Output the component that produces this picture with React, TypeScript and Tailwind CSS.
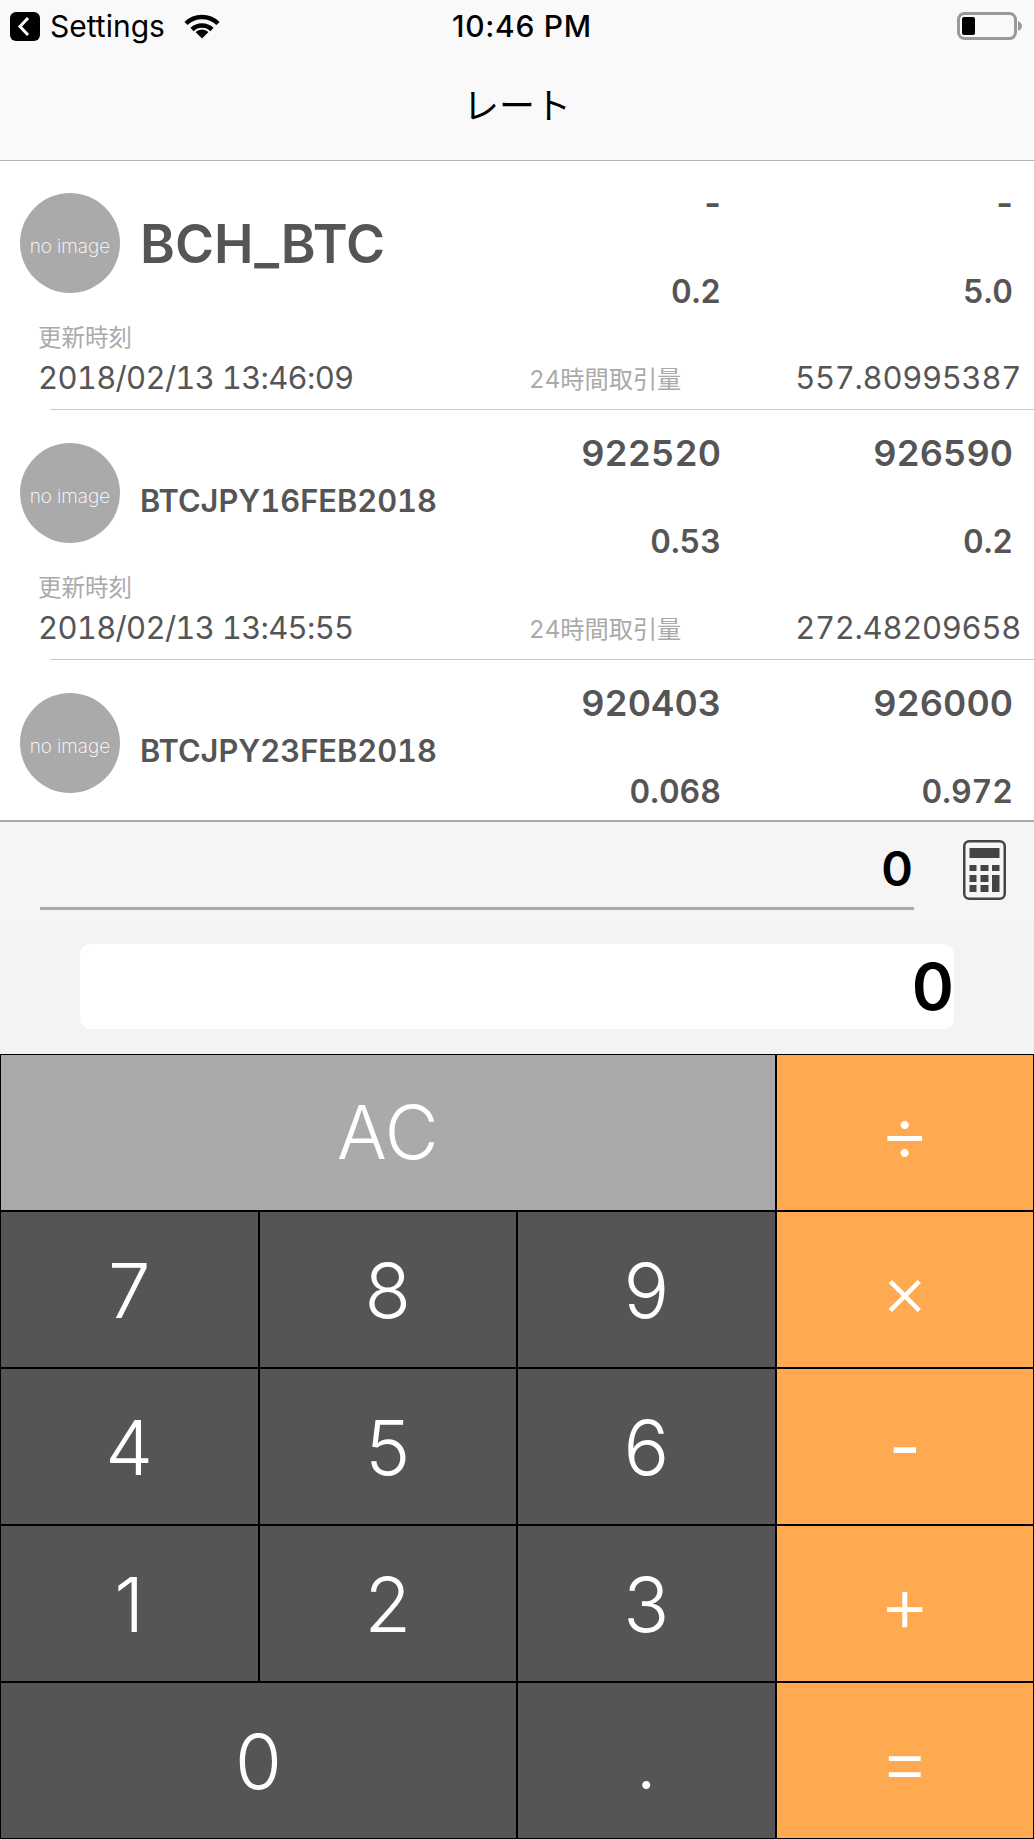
import React from 'react';

interface Rate {
  pair: string;
  big?: boolean;
  bid: string;
  ask: string;
  bidSize: string;
  askSize: string;
  time?: string;
  volume?: string;
}

const rates: Rate[] = [
  { pair: 'BCH_BTC', big: true, bid: '-', ask: '-', bidSize: '0.2', askSize: '5.0', time: '2018/02/13 13:46:09', volume: '557.80995387' },
  { pair: 'BTCJPY16FEB2018', bid: '922520', ask: '926590', bidSize: '0.53', askSize: '0.2', time: '2018/02/13 13:45:55', volume: '272.48209658' },
  { pair: 'BTCJPY23FEB2018', bid: '920403', ask: '926000', bidSize: '0.068', askSize: '0.972' },
];

const keys = [
  { label: 'AC', cls: 'col-span-3 bg-[#aaaaaa] text-[74px] font-light' },
  { label: '÷', cls: 'bg-[#ffaa50] text-[78px] font-light' },
  { label: '7', cls: 'bg-[#555555] text-[76px] font-light' },
  { label: '8', cls: 'bg-[#555555] text-[76px] font-light' },
  { label: '9', cls: 'bg-[#555555] text-[76px] font-light' },
  { label: '×', cls: 'bg-[#ffaa50] text-[72px] font-light' },
  { label: '4', cls: 'bg-[#555555] text-[76px] font-light' },
  { label: '5', cls: 'bg-[#555555] text-[76px] font-light' },
  { label: '6', cls: 'bg-[#555555] text-[76px] font-light' },
  { label: '-', cls: 'bg-[#ffaa50] text-[70px]' },
  { label: '1', cls: 'bg-[#555555] text-[76px] font-light' },
  { label: '2', cls: 'bg-[#555555] text-[76px] font-light' },
  { label: '3', cls: 'bg-[#555555] text-[76px] font-light' },
  { label: '+', cls: 'bg-[#ffaa50] text-[78px] font-light' },
  { label: '0', cls: 'col-span-2 bg-[#555555] text-[76px] font-light' },
  { label: '.', cls: 'bg-[#555555] text-[76px] font-light' },
  { label: '=', cls: 'bg-[#ffaa50] text-[78px] font-light' },
];

const BackIcon = () => (
  <svg width="30" height="29" viewBox="0 0 30 29" className="shrink-0">
    <rect width="30" height="29" rx="6" fill="#000" />
    <path d="M18 6 L10 14.5 L18 23" fill="none" stroke="#fff" strokeWidth="3" />
  </svg>
);

const WifiIcon = () => (
  <svg width="36" height="25" viewBox="0 0 36 25" className="shrink-0">
    <path d="M2 9.5 A23 23 0 0 1 34 9.5" fill="none" stroke="#000" strokeWidth="4.5" />
    <path d="M8 15.5 A14.5 14.5 0 0 1 28 15.5" fill="none" stroke="#000" strokeWidth="4.5" />
    <path d="M18 24.5 L11.5 18 A9.5 9.5 0 0 1 24.5 18 Z" fill="#000" />
  </svg>
);

const BatteryIcon = () => (
  <svg width="65" height="28" viewBox="0 0 65 28" className="shrink-0">
    <rect x="1.5" y="1.5" width="57" height="25" rx="6" fill="none" stroke="#999999" strokeWidth="3" />
    <rect x="5" y="5" width="13" height="18" rx="2" fill="#000" />
    <path d="M61 9 C63.5 10 65 12 65 14 C65 16 63.5 18 61 19 Z" fill="#999999" />
  </svg>
);

const CalcIcon = () => (
  <svg width="43" height="60" viewBox="0 0 43 60" className="shrink-0" fill="#444444">
    <rect x="1.25" y="1.25" width="40.5" height="57.5" rx="5" fill="none" stroke="#444444" strokeWidth="2.5" />
    <rect x="6.5" y="8" width="30" height="10" />
    <rect x="6.5" y="25" width="7" height="6" />
    <rect x="17.5" y="25" width="8" height="6" />
    <rect x="29" y="25" width="7.5" height="6" />
    <rect x="6.5" y="35" width="7" height="7" />
    <rect x="17.5" y="35" width="8" height="7" />
    <rect x="29" y="35" width="7.5" height="17" />
    <rect x="6.5" y="45" width="7" height="7" />
    <rect x="17.5" y="45" width="8" height="7" />
  </svg>
);

const RateRow = ({ rate }: { rate: Rate }) => (
  <div className="h-[250px] shrink-0 flex flex-col text-[#555555] tabular-nums">
    <div className="h-[160px] flex shrink-0">
      <div className="w-[100px] h-[100px] ml-[20px] mt-[33px] pt-[9px] rounded-full bg-[#aaaaaa] flex items-center justify-center text-white text-[19px] font-extralight shrink-0">
        no image
      </div>
      <div className={`ml-[20px] mt-[33px] h-[100px] flex items-center font-semibold whitespace-nowrap ${rate.big ? 'text-[53px] pt-[4px]' : 'text-[30.8px] pt-[16px]'}`}>
        {rate.pair}
      </div>
      <div className="ml-auto flex pr-[21px] font-semibold text-right">
        <div className="w-[200px] flex flex-col">
          <div className={`h-[40px] mt-[23px] text-[36px] leading-[40px] ${rate.bid === '-' ? 'normal-nums' : ''}`}>{rate.bid}</div>
          <div className="h-[40px] mt-[49px] text-[32px] leading-[40px]">{rate.bidSize}</div>
        </div>
        <div className="w-[292px] flex flex-col">
          <div className={`h-[40px] mt-[23px] text-[36px] leading-[40px] ${rate.ask === '-' ? 'normal-nums' : ''}`}>{rate.ask}</div>
          <div className="h-[40px] mt-[49px] text-[32px] leading-[40px]">{rate.askSize}</div>
        </div>
      </div>
    </div>
    {rate.time && (
      <div className="h-[89px] flex flex-col pl-[38px] pr-[13px]">
        <div className="h-[30px] mt-[3px] text-[23.5px] leading-[30px] text-[#aaaaaa]">更新時刻</div>
        <div className="flex items-center h-[40px] mt-[5px]">
          <div className="w-[491px] text-[31px] tracking-[-0.7px]">{rate.time}</div>
          <div className="pt-[5px] text-[24.2px] text-[#aaaaaa]">24時間取引量</div>
          <div className="ml-auto text-[31px] tracking-[-0.3px]">{rate.volume}</div>
        </div>
      </div>
    )}
    <div className="h-px ml-[50px] bg-[#c8c8c8] shrink-0" />
  </div>
);

export default function App() {
  return (
    <div className='w-[1034px] h-[1839px] flex flex-col bg-white overflow-hidden font-["Inter","Noto_Sans_CJK_JP",sans-serif]'>
      <div className="h-[161px] shrink-0 bg-[#f9f9f9] border-b border-[#b2b2b2] relative z-10 flex flex-col">
        <div className="h-[52px] flex items-center pl-[10px] pr-[12px]">
          <div className="w-[442px] flex items-center">
            <BackIcon />
            <span className="ml-[10px] text-[30px] text-black">Settings</span>
            <span className="ml-[19px]">
              <WifiIcon />
            </span>
          </div>
          <span className="text-[30px] font-medium tracking-[0.7px] text-black">10:46 PM</span>
          <span className="ml-auto">
            <BatteryIcon />
          </span>
        </div>
        <div className="flex-1 flex items-center justify-center pb-[6px] text-[36px] text-black font-['Noto_Sans_CJK_JP',sans-serif]">
          レート
        </div>
      </div>

      <div className="h-[660px] -mt-px shrink-0 overflow-hidden">
        {rates.map((r) => (
          <RateRow key={r.pair} rate={r} />
        ))}
      </div>

      <div className="h-[100px] shrink-0 bg-[#f5f5f5] border-t-2 border-[#aaaaaa] flex pl-[40px] pr-[28px]">
        <div className="w-[874px] h-[88px] border-b-[3px] border-[#aaaaaa] flex items-center justify-end pt-[8px] pr-[1px] text-[48px] font-semibold text-black">
          0
        </div>
        <div className="ml-[49px] mt-[18px]">
          <CalcIcon />
        </div>
      </div>

      <div className="h-[134px] shrink-0 bg-[#f3f3f3] pt-[24px] px-[80px]">
        <div className="h-[85px] rounded-[10px] bg-white flex items-center justify-end text-[64px] font-semibold text-black">
          0
        </div>
      </div>

      <div className="h-[785px] shrink-0 grid grid-cols-4 grid-rows-5 gap-[2px] p-px bg-black">
        {keys.map((k) => (
          <div key={k.label} className={`flex items-center justify-center text-white ${k.cls}`}>
            {k.label}
          </div>
        ))}
      </div>
    </div>
  );
}
